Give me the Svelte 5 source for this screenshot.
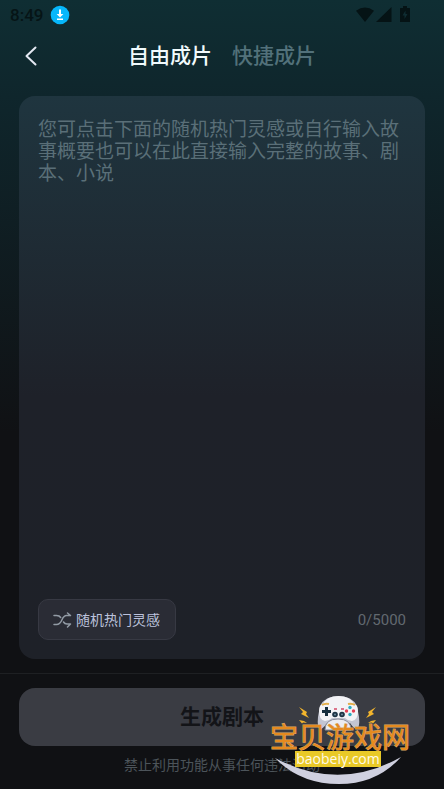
<script>
  const MAX_LENGTH = 5000;

  const tabs = [
    { id: 'free', label: '自由成片' },
    { id: 'quick', label: '快捷成片' },
  ];

  let activeTab = $state('free');
  let story = $state('');
</script>

<div class="screen">
  <div class="status-bar">
    <div class="status-left">
      <span class="clock">8:49</span>
      <svg width="20" height="20" viewBox="0 0 20 20" aria-hidden="true">
        <circle cx="10" cy="10" r="9.3" fill="#06b7fb" />
        <path d="M9 4.500h2v4.500h2.400L10 12.600 6.600 9H9zM7 13.600h6v1.400H7z" fill="#fff" />
      </svg>
    </div>
    <svg class="status-icons" width="56" height="18" viewBox="0 0 56 18" aria-hidden="true">
      <path d="M0 4.800Q9-1.600 18 4.800L9 16z" />
      <path d="M20 16 35.500 1V16z" />
      <path
        fill-rule="evenodd"
        d="M47 0h4v2h2.500q.5 0 .5.500v13q0 .5-.5.500h-9q-.5 0-.5-.5v-13q0-.5.500-.5H47zM49.500 4.500 46.500 9.500h2V13l3-5h-2z"
      />
    </svg>
  </div>

  <header class="top-bar">
    <button type="button" class="back" aria-label="返回">
      <svg width="14" height="22" viewBox="0 0 14 22" aria-hidden="true">
        <path d="M11.500 2.500 2.500 11l9 8.500" />
      </svg>
    </button>
    <nav class="tabs">
      {#each tabs as tab (tab.id)}
        <button
          type="button"
          class="tab"
          class:active={activeTab === tab.id}
          onclick={() => (activeTab = tab.id)}
        >
          {tab.label}
        </button>
      {/each}
    </nav>
  </header>

  <main class="card">
    <textarea
      class="story"
      aria-label="故事概要"
      maxlength={MAX_LENGTH}
      placeholder="您可点击下面的随机热门灵感或自行输入故事概要也可以在此直接输入完整的故事、剧本、小说"
      bind:value={story}
    ></textarea>
    <div class="card-footer">
      <button type="button" class="random">
        <svg width="19" height="18" viewBox="0 0 19 18" aria-hidden="true">
          <path d="M1 4.500h2.500q3 0 4.200 2M1 13.500h2.500C10 13.500 8 4.500 13.500 4.500H17.500M14.500 2l3 2.500M10.500 11q1.200 2 3.500 2h3.500L14.500 16" />
        </svg>
        <span>随机热门灵感</span>
      </button>
      <span class="count">{story.length}/{MAX_LENGTH}</span>
    </div>
  </main>

  <footer class="bottom">
    <button type="button" class="generate">生成剧本</button>
    <p class="notice">禁止利用功能从事任何违法活动</p>
  </footer>

  <svg class="watermark" width="150" height="96" viewBox="0 0 150 96" aria-hidden="true">
    <!-- gamepad -->
    <path d="M54 16Q59 6 72.500 6T91 16L93 27Q94 37 91 39Q88 39 84 33H61Q57 39 54 39Q51 37 52 27z" fill="#c3c5d2" />
    <path d="M57 14Q61 6 72.500 6T88 14Q92 15 92 21Q92 30 86 31Q82 31 79 28H66Q63 31 59 31Q53 30 53 21Q53 15 57 14z" fill="#f3f3f6" />
    <path d="M59 40Q59 29 72 29T85 40z" fill="#ececf1" stroke="#8a8d9a" stroke-width="1" />
    <path d="M56 15q3-2 7-1M82 14q4-1 7 1" fill="none" stroke="#e2ae4b" stroke-width="2" />
    <path d="M59 17h3v3h3v3h-3v3h-3v-3h-3v-3h3z" fill="#162e3d" />
    <path d="M68 19h3M75 19h3" stroke="#d54b68" stroke-width="1.500" />
    <circle cx="69" cy="24.500" r="2.800" fill="#1c3344" />
    <circle cx="76" cy="24.500" r="2.800" fill="#1c3344" />
    <circle cx="69" cy="24.500" r="1" fill="#6c8a9c" />
    <circle cx="76" cy="24.500" r="1" fill="#6c8a9c" />
    <circle cx="84" cy="17.500" r="1.700" fill="#2cabc0" />
    <circle cx="80.500" cy="21" r="1.700" fill="#e33f53" />
    <circle cx="87.500" cy="21" r="1.700" fill="#e33f53" />
    <circle cx="84" cy="24.500" r="1.700" fill="#2cabc0" />
    <!-- sparks -->
    <g fill="#f2b52d">
      <path d="M33 17 41 22 40 24 43 28 35 24 37 22z" />
      <path d="M33 30l5 1 3 2-4-.5-1 1z" />
      <path d="M110 17 102 22 103 24 100 28 108 24 106 22z" />
      <path d="M110 30l-5 1-3 2 4-.5 1 1z" />
    </g>
    <!-- smile -->
    <path d="M9 68Q73 102 135 67Q111 94 73 94Q34 94 9 68z" fill="#cfd0df" />
    <text class="brand" x="4" y="58">宝贝游戏网</text>
    <rect x="29" y="61" width="86" height="16" fill="#e9c927" />
    <text class="domain" x="72" y="74" text-anchor="middle">baobeiy.com</text>
  </svg>
</div>

<style>
  :global(body) {
    margin: 0;
    background: #101114;
  }

  .screen {
    position: relative;
    display: flex;
    flex-direction: column;
    box-sizing: border-box;
    min-height: 100vh;
    background: linear-gradient(#0f2e33 0, #0f262c 96px, #101114 432px);
    color: #fff;
    font-family: Roboto, 'Noto Sans CJK SC', sans-serif;
  }

  button {
    padding: 0;
    border: 0;
    background: none;
    color: inherit;
    font-family: inherit;
    cursor: pointer;
  }

  svg {
    display: block;
    flex: none;
  }

  .status-bar {
    display: flex;
    align-items: center;
    justify-content: space-between;
    height: 30px;
    padding: 0 32px 0 10px;
  }

  .status-left {
    display: flex;
    align-items: center;
    gap: 7px;
  }

  .clock {
    color: #061416;
    font-size: 17px;
    font-weight: 500;
  }

  .status-icons {
    fill: #051315;
  }

  .top-bar {
    display: grid;
    grid-template-columns: 1fr auto 1fr;
    align-items: center;
    height: 52px;
    padding: 0 24px;
  }

  .back {
    justify-self: start;
  }

  .back path {
    fill: none;
    stroke: #e4e8f2;
    stroke-width: 2;
    stroke-linecap: round;
    stroke-linejoin: round;
  }

  .tabs {
    display: flex;
    gap: 20px;
  }

  .tab {
    color: #52717a;
    font-size: 21px;
    font-weight: 500;
    line-height: 28px;
  }

  .tab.active {
    color: #f1fbfd;
  }

  .card {
    display: flex;
    flex: 1;
    flex-direction: column;
    margin: 14px 19px;
    padding: 19px;
    border-radius: 16px;
    background: linear-gradient(#1f353f 0, #1e2129 300px, #1e2128 100%);
  }

  .story {
    flex: 1;
    width: 100%;
    box-sizing: border-box;
    padding: 2px 0 0;
    border: 0;
    outline: 0;
    background: none;
    color: #dde4ee;
    font-family: 'Noto Sans CJK SC', sans-serif;
    font-size: 19px;
    line-height: 22px;
    resize: none;
  }

  .story::placeholder {
    color: #5a6f78;
  }

  .card-footer {
    display: flex;
    align-items: center;
    justify-content: space-between;
  }

  .random {
    display: flex;
    align-items: center;
    gap: 4px;
    height: 41px;
    padding: 0 15px 0 14px;
    border: 1px solid #373943;
    border-radius: 10px;
    background: #2a2c35;
    color: #bcc2dc;
    font-size: 14px;
    line-height: 20px;
  }

  .random path {
    fill: none;
    stroke: #929ba5;
    stroke-width: 1.5;
    stroke-linecap: round;
    stroke-linejoin: round;
  }

  .count {
    color: #626970;
    font-size: 15px;
  }

  .bottom {
    padding: 14px 19px;
    border-top: 1px solid #1e2023;
    text-align: center;
  }

  .generate {
    display: block;
    width: 100%;
    height: 58px;
    border-radius: 16px;
    background: #3a3c43;
    color: #131418;
    font-size: 21px;
    font-weight: 700;
    line-height: 28px;
  }

  .notice {
    margin: 9px 0 0;
    color: #4c545a;
    font-size: 14px;
    line-height: 20px;
  }

  .watermark {
    position: absolute;
    right: 28px;
    bottom: 3px;
    pointer-events: none;
  }

  .brand {
    fill: #e58a1f;
    stroke: #d9a766;
    stroke-width: 1;
    paint-order: stroke;
    font-family: 'Noto Sans CJK SC', sans-serif;
    font-size: 28px;
    font-weight: 400;
  }

  .domain {
    fill: #fffbe8;
    font-family: 'Open Sans', sans-serif;
    font-size: 14px;
    font-weight: 400;
  }
</style>
